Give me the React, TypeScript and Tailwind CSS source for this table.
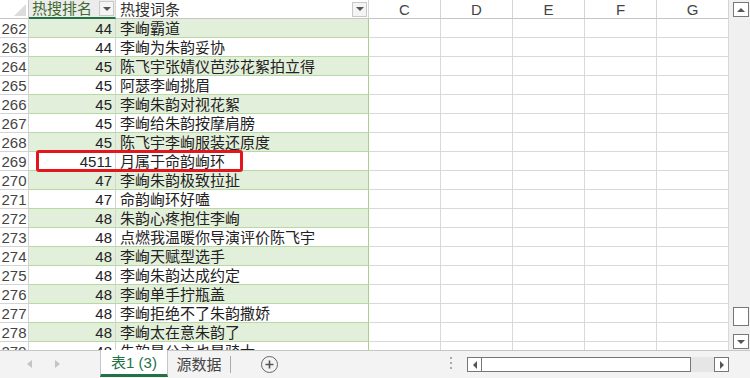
import React from "react";

const rows: [number, number, string][] = [
  [262, 44, "李峋霸道"],
  [263, 44, "李峋为朱韵妥协"],
  [264, 45, "陈飞宇张婧仪芭莎花絮拍立得"],
  [265, 45, "阿瑟李峋挑眉"],
  [266, 45, "李峋朱韵对视花絮"],
  [267, 45, "李峋给朱韵按摩肩膀"],
  [268, 45, "陈飞宇李峋服装还原度"],
  [269, 4511, "月属于命韵峋环"],
  [270, 47, "李峋朱韵极致拉扯"],
  [271, 47, "命韵峋环好嗑"],
  [272, 48, "朱韵心疼抱住李峋"],
  [273, 48, "点燃我温暖你导演评价陈飞宇"],
  [274, 48, "李峋天赋型选手"],
  [275, 48, "李峋朱韵达成约定"],
  [276, 48, "李峋单手拧瓶盖"],
  [277, 48, "李峋拒绝不了朱韵撒娇"],
  [278, 48, "李峋太在意朱韵了"],
  [279, 48, "朱韵是公主也是骑士"],
];

const extra = ["C", "D", "E", "F", "G"];

function Dropdown() {
  return (
    <div className="flex h-[15px] w-[15px] items-center justify-center border border-[#c8c8c8] bg-[#f4f4f4]">
      <div className="h-0 w-0 border-x-[4px] border-t-[4px] border-x-transparent border-t-[#555]" />
    </div>
  );
}

function Grid() {
  return (
    <div className="relative h-[350px] w-[729px] overflow-hidden bg-white">
      <div className="grid grid-cols-[29px_87px_253px_72px_72px_72px_72px_72px] auto-rows-[19px]">
        {/* corner + column headers */}
        <div className="flex items-end justify-end border-r border-b border-[#c6c6c6] bg-white pr-[2px] pb-[2px]">
          <svg width="12" height="12" viewBox="0 0 12 12">
            <path d="M12 0V12H0Z" fill="#dcdcdc" />
          </svg>
        </div>
        <div className="flex items-center justify-between border-r border-b-2 border-r-[#d4d4d4] border-b-[#217346] bg-[#ececec] pl-[3px] text-[#3f6b2c]">
          <span>热搜排名</span>
          <div className="mr-[1px]"><Dropdown /></div>
        </div>
        <div className="flex items-center justify-between border-r border-b border-r-[#d4d4d4] border-b-[#c6c6c6] bg-white pl-[4px] text-[#333]">
          <span>热搜词条</span>
          <div className="mr-[1px]"><Dropdown /></div>
        </div>
        {extra.map((c) => (
          <div key={c} className="flex items-center justify-center border-r border-b border-r-[#d4d4d4] border-b-[#c6c6c6] text-[#444]">
            {c}
          </div>
        ))}
        {rows.map(([n, rank, word]) => {
          const green = n % 2 === 0;
          const bg = green ? "bg-[#e2efda]" : "bg-white";
          return (
            <React.Fragment key={n}>
              <div className="flex items-center justify-center border-r border-b border-[#d4d4d4] bg-white text-[#444]">
                {n}
              </div>
              <div className={`flex items-center justify-end border-r border-b border-r-[#d4d4d4] border-b-[#b9d9a3] pr-[3px] text-[#222] ${bg}`}>
                {rank}
              </div>
              <div className={`flex items-center border-r border-b border-r-[#a9d08e] border-b-[#b9d9a3] pl-[4px] text-[#222] ${bg}`}>
                {word}
              </div>
              {extra.map((c) => (
                <div key={c} className="border-r border-b border-[#d9d9d9]" />
              ))}
            </React.Fragment>
          );
        })}
      </div>
      {/* highlight drawn over row 269 */}
      <div className="absolute left-[36px] top-[150px] h-[22px] w-[207px] rounded-[3px] border-[3px] border-[#e3151d]" />
    </div>
  );
}

function VScroll() {
  return (
    <div className="flex h-[350px] w-[21px] flex-col items-center bg-[#f0f0f0] pt-[2px] pl-[2px]">
      <div className="flex h-[15px] w-[16px] items-center justify-center border border-[#777] bg-white">
        <div className="h-0 w-0 border-x-[4px] border-b-[4px] border-x-transparent border-b-[#555]" />
      </div>
      <div className="flex-1" />
      <div className="mb-[8px] h-[19px] w-[16px] border border-[#777] bg-white" />
      <div className="mb-[1px] flex h-[15px] w-[16px] items-center justify-center border border-[#777] bg-white">
        <div className="h-0 w-0 border-x-[4px] border-t-[4px] border-x-transparent border-t-[#555]" />
      </div>
    </div>
  );
}

function TabBar() {
  return (
    <div className="flex h-[28px] items-start border-t border-[#c6c6c6] bg-[#f3f3f3]">
      <div className="flex h-[26px] w-[100px] items-center gap-[23px] pl-[27px]">
        <div className="h-0 w-0 border-y-[4px] border-r-[5px] border-y-transparent border-r-[#c4c4c4]" />
        <div className="h-0 w-0 border-y-[4px] border-l-[5px] border-y-transparent border-l-[#c4c4c4]" />
      </div>
      <div className="-mt-px flex h-[27px] w-[68px] items-center justify-center border-x border-[#c6c6c6] border-b-[3px] border-b-[#217346] bg-white text-[#217346]">
        表1 (3)
      </div>
      <div className="flex h-[26px] w-[62px] items-center justify-center text-[#444]">源数据</div>
      <div className="mt-[5px] h-[17px] w-px bg-[#aaa]" />
      <div className="mt-[5px] ml-[30px] flex h-[17px] w-[17px] items-center justify-center rounded-full border-[1.5px] border-[#666]">
        <svg width="9" height="9" viewBox="0 0 9 9">
          <path d="M4.5 0.5v8M0.5 4.5h8" stroke="#555" strokeWidth="1.6" />
        </svg>
      </div>
      <div className="mt-[6px] ml-[172px] flex flex-col gap-[3px]">
        <div className="h-[2px] w-[2px] bg-[#aaa]" />
        <div className="h-[2px] w-[2px] bg-[#aaa]" />
        <div className="h-[2px] w-[2px] bg-[#aaa]" />
      </div>
      <div className="mt-[6px] ml-[15px] flex h-[15px] w-[262px] items-stretch">
        <div className="flex w-[15px] items-center justify-center border border-[#777] bg-white">
          <div className="h-0 w-0 border-y-[4px] border-r-[4px] border-y-transparent border-r-[#555]" />
        </div>
        <div className="w-[209px] border-y border-r border-[#777] bg-white" />
        <div className="flex-1 bg-[#e6e6e6]" />
        <div className="flex w-[15px] items-center justify-center border border-[#777] bg-white">
          <div className="h-0 w-0 border-y-[4px] border-l-[4px] border-y-transparent border-l-[#555]" />
        </div>
      </div>
    </div>
  );
}

export default function App() {
  return (
    <div className="flex h-[378px] w-[750px] flex-col overflow-hidden bg-white text-[15px] leading-[19px] [font-family:'Liberation_Sans','Noto_Sans_CJK_SC',sans-serif]">
      <div className="flex">
        <Grid />
        <VScroll />
      </div>
      <TabBar />
    </div>
  );
}
